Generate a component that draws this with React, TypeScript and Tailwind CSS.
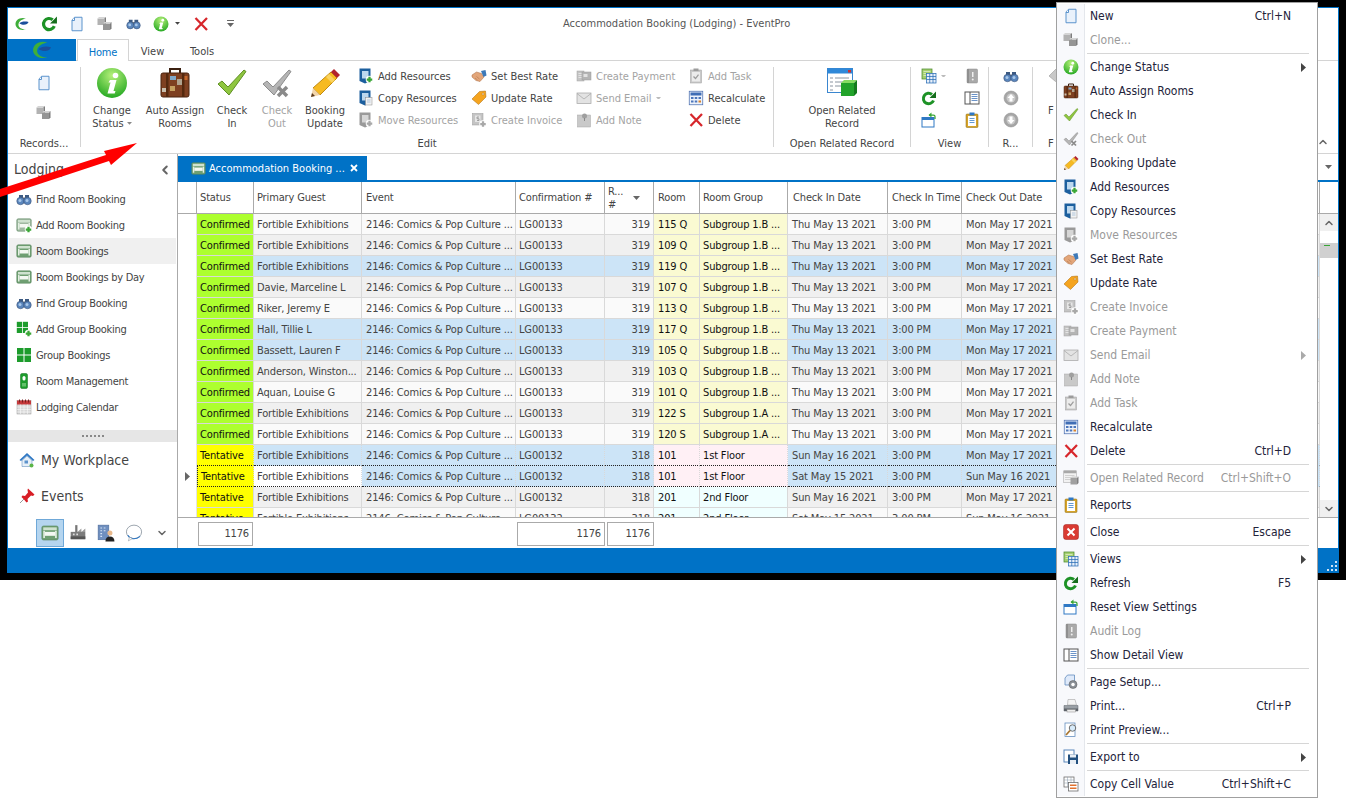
import React from "react";
import { ChevronLeft, ChevronUp, ChevronDown } from "lucide-react";

const Cube = ({ x, y, c = "#a8a8a8" }: { x: number; y: number; c?: string }) => (
  <g>
    <rect x={x} y={y} width="14" height="13" fill={c} />
    <path d={`M${x} ${y}l3-3h14l-3 3z`} fill="#d4d4d4" />
    <path d={`M${x + 14} ${y}l3-3v13l-3 3z`} fill="#7d7d7d" />
  </g>
);
const Plus = ({ x = 24, y = 24, c = "#3aa636" }: { x?: number; y?: number; c?: string }) => (
  <g>
    <circle cx={x} cy={y} r="7.500" fill="#fff" />
    <path d={`M${x - 5.5} ${y}h11M${x} ${y - 5.5}v11`} stroke={c} strokeWidth="4.500" />
  </g>
);
const Bed = ({ g = false }: { g?: boolean }) => (
  <g>
    <rect x="1.500" y="3.500" width="29" height="25" rx="3" fill={g ? "#9fb8a0" : "#6f9f72"} stroke="#54805a" />
    <rect x="4" y="6" width="24" height="5" fill="#cfe2cf" />
    <rect x="7" y="14" width="18" height="7" fill="#f4f8f2" />
    <rect x="4" y="12" width="3" height="13" fill="#e4efe2" />
    <rect x="25" y="12" width="3" height="13" fill="#e4efe2" />
  </g>
);
const Res = ({ g = false }: { g?: boolean }) => (
  <g>
    <path d="M3 1h22v25l-11 5-11-5z" fill={g ? "#9a9a9a" : "#1c5f9e"} />
    <rect x="8" y="6" width="13" height="15" fill={g ? "#d6d6d6" : "#bcd8ef"} />
  </g>
);
const Grid4 = () => (
  <g fill="#1d9c2c">
    <rect x="2" y="2" width="13" height="13" />
    <rect x="17" y="2" width="13" height="13" />
    <rect x="2" y="17" width="13" height="13" />
    <rect x="17" y="17" width="13" height="13" />
  </g>
);

const icons: Record<string, React.ReactNode> = {
  logo: (
    <g fill="none">
      <path d="M24 5C12 1 3 8 3 16c0 8 9 14 21 11-10 0-16-5-15-11 1-6 8-10 15-11z" fill="#3fae3a" />
      <path d="M11 15c3-4 11-5 18-3-1 5-10 8-18 3z" fill="#1b4f9c" />
    </g>
  ),
  page: (
    <g>
      <path d="M11 2.500h15v27H6V8z" fill="#e9f1fb" stroke="#5b93cc" strokeWidth="2" />
      <path d="M11 3v6H6" fill="#fff" stroke="#5b93cc" strokeWidth="2" />
    </g>
  ),
  clone: (
    <g>
      <Cube x={1} y={5} c="#b2b2b2" />
      <Cube x={12} y={15} c="#959595" />
    </g>
  ),
  binoc: (
    <g>
      <rect x="6" y="8" width="8" height="8" fill="#3c5a82" />
      <rect x="18" y="8" width="8" height="8" fill="#3c5a82" />
      <rect x="13" y="13" width="6" height="6" fill="#5f6d7e" />
      <circle cx="9" cy="20" r="7.500" fill="#5a86bd" stroke="#31476a" />
      <circle cx="23" cy="20" r="7.500" fill="#5a86bd" stroke="#31476a" />
      <circle cx="8" cy="19" r="3" fill="#a9c8ea" />
      <circle cx="22" cy="19" r="3" fill="#a9c8ea" />
    </g>
  ),
  info: (
    <g>
      <defs>
        <radialGradient id="infog" cx="50%" cy="25%" r="80%">
          <stop offset="0" stopColor="#b6f07a" />
          <stop offset="1" stopColor="#1ea51e" />
        </radialGradient>
      </defs>
      <circle cx="16" cy="16" r="15" fill="url(#infog)" />
      <circle cx="19.500" cy="8.500" r="2.800" fill="#fff" />
      <path d="M14 13h6.500l-3 11h2l-.8 2.500H11.500l3-11h-2z" fill="#fff" />
    </g>
  ),
  del: <path d="M5 4l23 24M28 4L5 28" stroke="#d7262b" strokeWidth="4.500" />,
  refresh: (
    <g>
      <path d="M25 21a10.500 10.500 0 1 1-3-12" fill="none" stroke="#1d9226" strokeWidth="6" />
      <path d="M30 3v13H17z" fill="#156d1c" />
    </g>
  ),
  suitcase: (
    <g>
      <path d="M11 6V2h10v4" fill="none" stroke="#3b2010" strokeWidth="2" />
      <rect x="2" y="6" width="28" height="24" rx="2" fill="#7e4021" stroke="#4b2410" />
      <rect x="7" y="6" width="2.500" height="24" fill="#54290f" />
      <rect x="23" y="6" width="2.500" height="24" fill="#54290f" />
      <rect x="11" y="9" width="6" height="4" fill="#7fa8c9" />
      <rect x="18" y="12" width="5" height="6" fill="#b0a38f" />
      <rect x="11" y="19" width="5" height="5" fill="#c5a060" />
      <rect x="3" y="21" width="4" height="4" fill="#c9bfae" />
      <rect x="25.500" y="9" width="3" height="4" fill="#c3672c" />
    </g>
  ),
  check: <path d="M2 17l4-3 6 6L28 3l2 1.500L13 28z" fill="#8fc640" stroke="#5f8f24" />,
  checkout: (
    <g>
      <path d="M2 17l4-3 6 6L28 3l2 1.500L13 28z" fill="#b5b5b5" stroke="#8c8c8c" />
      <path d="M17 20l9 9M26 20l-9 9" stroke="#8a8a8a" strokeWidth="3.500" />
    </g>
  ),
  pencil: (
    <g>
      <path d="M22 5l6 6L11 28l-7-7z" fill="#f6ba22" stroke="#c08a12" />
      <path d="M20 7l6 6-3 3-6-6z" fill="#fad35f" />
      <path d="M22 5l3-3 6 6-3 3z" fill="#b2222e" />
      <path d="M4 21l7 7-9 2z" fill="#f2d5ab" />
      <path d="M2 30l1-4 3 3z" fill="#5a3a20" />
    </g>
  ),
  addres: (
    <g>
      <Res />
      <Plus x={23} y={23} />
    </g>
  ),
  copyres: (
    <g>
      <Res />
      <rect x="15" y="15" width="13" height="15" fill="#f2f2f2" stroke="#8a8a8a" />
      <path d="M18 20h7M18 24h7" stroke="#9bb7d4" strokeWidth="1.500" />
    </g>
  ),
  moveres: (
    <g>
      <Res g />
      <Plus x={23} y={23} c="#a8a8a8" />
    </g>
  ),
  hand: (
    <g>
      <path d="M2 14l9-6 10 3 5 7-8 9-8-2-8-7z" fill="#e3a67a" stroke="#a96b40" />
      <path d="M11 17l6 5M8 20l5 4" stroke="#a96b40" />
      <path d="M20 6l9-2 2 11-6 3z" fill="#3d79b8" />
    </g>
  ),
  tag: (
    <g>
      <path d="M2 18L17 3l12-1 1 12-15 15z" fill="#f5a41f" stroke="#a8690a" />
      <circle cx="24" cy="8" r="2" fill="#fff" stroke="#a8690a" />
    </g>
  ),
  taggrey: (
    <g>
      <path d="M2 18L17 3l12-1 1 12-15 15z" fill="#c8c8c8" stroke="#8d8d8d" />
      <circle cx="24" cy="8" r="2" fill="#fff" stroke="#8d8d8d" />
    </g>
  ),
  invoice: (
    <g>
      <rect x="3" y="3" width="21" height="23" fill="#c4c4c4" stroke="#9a9a9a" />
      <rect x="8" y="7" width="11" height="13" fill="#e6e6e6" />
      <path d="M16 10h-4v3.500h4V17h-4" fill="none" stroke="#8a8a8a" strokeWidth="1.500" />
      <Plus x={24} y={24} c="#a8a8a8" />
    </g>
  ),
  payment: (
    <g>
      <rect x="2" y="6" width="14" height="20" fill="#c4c4c4" stroke="#a4a4a4" />
      <rect x="12" y="8" width="18" height="16" fill="#b4b4b4" stroke="#9a9a9a" />
      <rect x="15" y="12" width="8" height="6" fill="#e2e2e2" />
      <path d="M5 11h6M5 15h6M5 19h6" stroke="#eee" strokeWidth="1.500" />
    </g>
  ),
  mail: (
    <g>
      <rect x="2" y="6" width="28" height="21" fill="#e3e3e3" stroke="#a8a8a8" strokeWidth="1.500" />
      <path d="M2 7l14 11L30 7" fill="none" stroke="#a8a8a8" strokeWidth="1.500" />
    </g>
  ),
  note: (
    <g>
      <rect x="3" y="6" width="26" height="24" fill="#c9c9c9" stroke="#a6a6a6" />
      <circle cx="17" cy="8" r="5" fill="#9f9f9f" />
      <path d="M17 12v6" stroke="#888" strokeWidth="2" />
    </g>
  ),
  task: (
    <g>
      <rect x="5" y="4" width="22" height="26" fill="#c9c9c9" stroke="#9c9c9c" />
      <rect x="8" y="8" width="16" height="19" fill="#ececec" />
      <rect x="11" y="1" width="10" height="5" fill="#9c9c9c" />
      <path d="M11 17l4 4 6-8" fill="none" stroke="#9c9c9c" strokeWidth="2.500" />
    </g>
  ),
  calc: (
    <g>
      <rect x="2.500" y="2.500" width="27" height="27" fill="#eef3fb" stroke="#4c6fb0" strokeWidth="1.500" />
      <rect x="5" y="5" width="22" height="6" fill="#3f6db5" />
      <g fill="#4c76bb">
        <rect x="6" y="14" width="5" height="4" />
        <rect x="13.500" y="14" width="5" height="4" />
        <rect x="21" y="14" width="5" height="4" />
        <rect x="6" y="21" width="5" height="4" />
        <rect x="13.500" y="21" width="5" height="4" />
        <rect x="21" y="21" width="5" height="4" fill="#d9822b" />
      </g>
    </g>
  ),
  openrec: (
    <g>
      <rect x="1.500" y="1.500" width="25" height="24" fill="#fff" stroke="#3a86cf" />
      <rect x="1.500" y="1.500" width="25" height="5" fill="#2f88d8" />
      <rect x="22" y="3" width="3" height="2.500" fill="#d03030" />
      <path d="M4 11h3M9 11h14M4 15h3M9 15h14M4 19h3M9 19h9M4 23h3" stroke="#8a94a0" />
      <rect x="15" y="16" width="13" height="13" fill="#22a32a" />
      <path d="M15 16l3-3h13l-3 3z" fill="#86dc62" />
      <path d="M28 16l3-3v13l-3 3z" fill="#137a1c" />
    </g>
  ),
  openrecgrey: (
    <g>
      <rect x="1.500" y="1.500" width="25" height="24" fill="#f2f2f2" stroke="#a0a0a0" />
      <rect x="1.500" y="1.500" width="25" height="5" fill="#a8a8a8" />
      <path d="M4 11h19M4 15h19M4 19h14" stroke="#b0b0b0" />
      <rect x="15" y="16" width="13" height="13" fill="#a0a0a0" />
      <path d="M15 16l3-3h13l-3 3z" fill="#cfcfcf" />
      <path d="M28 16l3-3v13l-3 3z" fill="#808080" />
    </g>
  ),
  views: (
    <g>
      <rect x="2" y="2" width="20" height="20" fill="#a4cf6f" stroke="#4b8a2f" strokeWidth="1.500" />
      <path d="M5 7h14M5 11h14M5 15h14" stroke="#fff" />
      <rect x="11" y="11" width="19" height="19" fill="#e8f0fa" stroke="#2a6db5" strokeWidth="1.500" />
      <path d="M11 17h19M11 23h19M17.500 11v19M24 11v19" stroke="#2a6db5" strokeWidth="1.500" />
    </g>
  ),
  reset: (
    <g>
      <rect x="2" y="11" width="24" height="19" fill="#fff" stroke="#2f78c4" strokeWidth="2" />
      <rect x="2" y="11" width="24" height="5" fill="#2f78c4" />
      <path d="M16 6h9a3 3 0 0 1 3 3v5" fill="none" stroke="#3aa636" strokeWidth="2.500" />
      <path d="M21 1v10l-6-5z" fill="#3aa636" />
    </g>
  ),
  audit: (
    <g>
      <rect x="6" y="2" width="21" height="28" rx="2" fill="#a9a9a9" stroke="#8a8a8a" />
      <rect x="6" y="2" width="4" height="28" fill="#8f8f8f" />
      <path d="M17.500 8v10" stroke="#efefef" strokeWidth="3" />
      <circle cx="17.500" cy="23" r="2" fill="#efefef" />
    </g>
  ),
  up: (
    <g>
      <circle cx="16" cy="16" r="14" fill="#a6a6a6" stroke="#8a8a8a" />
      <circle cx="16" cy="16" r="9" fill="#c9c9c9" />
      <path d="M16 8l7 8h-4v7h-6v-7H9z" fill="#fff" />
    </g>
  ),
  down: (
    <g>
      <circle cx="16" cy="16" r="14" fill="#a6a6a6" stroke="#8a8a8a" />
      <circle cx="16" cy="16" r="9" fill="#c9c9c9" />
      <path d="M16 24l7-8h-4V9h-6v7H9z" fill="#fff" />
    </g>
  ),
  detail: (
    <g>
      <rect x="2" y="4" width="28" height="24" fill="#fff" stroke="#555" strokeWidth="2" />
      <path d="M12 4v24" stroke="#555" strokeWidth="2" />
      <path d="M15 9h12M15 13h12M15 17h12M15 21h12" stroke="#3a6fb5" strokeWidth="1.500" />
    </g>
  ),
  reports: (
    <g>
      <rect x="4" y="4" width="24" height="27" rx="2" fill="#d6a42a" stroke="#8d6a12" />
      <rect x="8" y="8" width="16" height="20" fill="#fff" />
      <rect x="11" y="1" width="10" height="6" fill="#2f78c4" />
      <path d="M11 13h10M11 17h10M11 21h10" stroke="#2f78c4" strokeWidth="1.500" />
    </g>
  ),
  closeb: (
    <g>
      <rect x="1" y="1" width="30" height="30" rx="5" fill="#d93a32" stroke="#9c1f1a" />
      <path d="M9 9l14 14M23 9L9 23" stroke="#fff" strokeWidth="4" />
    </g>
  ),
  setup: (
    <g>
      <path d="M9 2h14v20H4V8z" fill="#dfeafa" stroke="#5b87bb" strokeWidth="1.500" />
      <circle cx="20" cy="21" r="8" fill="#8a8f96" stroke="#555" />
      <circle cx="20" cy="21" r="3.500" fill="#fff" />
    </g>
  ),
  print: (
    <g>
      <path d="M10 3h14l3 11H9z" fill="#f4f4f4" stroke="#999" />
      <path d="M2 15h28v11H2z" fill="#9aa0a6" stroke="#5d6268" />
      <rect x="2" y="21" width="28" height="5" fill="#5d6268" />
      <rect x="8" y="23" width="17" height="5" fill="#eee" stroke="#888" />
    </g>
  ),
  preview: (
    <g>
      <rect x="4" y="2" width="20" height="27" fill="#fff" stroke="#5b87bb" strokeWidth="1.500" />
      <circle cx="19" cy="12" r="6.500" fill="#d7ebfb" stroke="#6d6d6d" strokeWidth="2" />
      <path d="M14 17l-8 9" stroke="#a8752f" strokeWidth="3.500" />
    </g>
  ),
  export: (
    <g>
      <rect x="2" y="2" width="20" height="24" fill="#fff" stroke="#5b87bb" strokeWidth="2" />
      <rect x="10" y="11" width="20" height="19" fill="#23507f" />
      <rect x="14" y="11" width="12" height="6" fill="#e8eef5" />
      <rect x="14" y="22" width="12" height="8" fill="#e8eef5" />
    </g>
  ),
  copycell: (
    <g>
      <rect x="2" y="2" width="20" height="20" fill="#fff" stroke="#666" strokeWidth="1.500" />
      <path d="M2 8h20M2 14h20M9 2v20M16 2v12" stroke="#8899aa" />
      <rect x="11" y="13" width="19" height="17" fill="#fff" stroke="#666" strokeWidth="1.500" />
      <rect x="14" y="17" width="13" height="3" fill="#e2702c" />
      <rect x="14" y="23" width="13" height="3" fill="#e2702c" />
    </g>
  ),
  bed: <Bed />,
  addbed: (
    <g>
      <Bed g />
      <Plus x={25} y={25} />
    </g>
  ),
  grid: <Grid4 />,
  addgrid: (
    <g>
      <g transform="scale(0.8)">
        <Grid4 />
      </g>
      <Plus x={25} y={25} />
    </g>
  ),
  mgmt: (
    <g>
      <rect x="9" y="1" width="14" height="30" rx="3" fill="#1d9c2c" stroke="#0f6f1a" />
      <rect x="13" y="6" width="6" height="9" rx="3" fill="#fff" />
      <rect x="12" y="20" width="8" height="7" fill="#63c16b" />
    </g>
  ),
  cal: (
    <g>
      <rect x="2" y="3" width="28" height="27" fill="#d9d9d9" stroke="#999" />
      <rect x="2" y="3" width="28" height="8" fill="#c5383a" />
      <path d="M7 1v6M13 1v6M19 1v6M25 1v6" stroke="#7a1f20" strokeWidth="2" />
      <path d="M2 16h28M2 21h28M2 26h28M9 11v19M16 11v19M23 11v19" stroke="#fff" />
    </g>
  ),
  home: (
    <g>
      <path d="M16 2L1 16l3 2 12-11 12 11 3-2z" fill="#2f78c4" />
      <path d="M6 17l10-9 10 9v12H6z" fill="#e8f0f8" stroke="#4a7fb5" />
      <rect x="11" y="17" width="7" height="6" fill="#5d93cc" />
      <circle cx="25" cy="27" r="4" fill="#5bb548" />
    </g>
  ),
  pin: (
    <g>
      <path d="M18 1l13 12-3 3-4-1-7 7 1 5-3 2-5-6-5-5 2-3 5 1 6-7-1-5z" fill="#d81e26" />
      <path d="M10 22l-8 8" stroke="#999" strokeWidth="2" />
    </g>
  ),
  factory: (
    <g>
      <rect x="11" y="2" width="4" height="13" fill="#777" />
      <rect x="3" y="14" width="26" height="13" fill="#7c7c7c" />
      <path d="M15 14l7-6v6l7-6v6z" fill="#9a9a9a" />
      <rect x="3" y="22" width="26" height="5" fill="#555" />
      <rect x="7" y="17" width="3" height="3" fill="#ddd" />
      <rect x="13" y="17" width="3" height="3" fill="#ddd" />
    </g>
  ),
  office: (
    <g>
      <rect x="2" y="2" width="19" height="26" fill="#6f8fbf" stroke="#4a6a99" />
      <path d="M6 7h3M12 7h3M6 12h3M12 12h3M6 17h3M6 22h3" stroke="#d6e4f5" strokeWidth="2" />
      <circle cx="23" cy="16" r="4.500" fill="#e9b98c" />
      <path d="M15 31c0-6 3-9 8-9s8 3 8 9z" fill="#222" />
    </g>
  ),
  chat: (
    <g>
      <ellipse cx="16" cy="14" rx="13.500" ry="12" fill="#fff" stroke="#8b96a0" strokeWidth="1.500" />
      <path d="M5 20c4 8 14 8 22 2" fill="none" stroke="#2f78c4" strokeWidth="2" />
      <path d="M8 23l-2 7 7-4z" fill="#fff" stroke="#8b96a0" />
    </g>
  ),
};

function Ic({ n, s = 16 }: { n: string; s?: number }) {
  return (
    <svg width={s} height={s} viewBox="0 0 32 32" className="shrink-0">
      {icons[n]}
    </svg>
  );
}

function Tri({ c = "#555", dir = "down", w = 7 }: { c?: string; dir?: "down" | "right"; w?: number }) {
  return dir === "down" ? (
    <svg width={w} height={(w * 4) / 7} viewBox="0 0 7 4" className="shrink-0">
      <path d="M0 0h7L3.500 4z" fill={c} />
    </svg>
  ) : (
    <svg width="5" height="9" viewBox="0 0 5 9" className="shrink-0">
      <path d="M0 0l5 4.500L0 9z" fill={c} />
    </svg>
  );
}

function Big({ icon, a, b, w, off, arrow }: { icon: string; a: string; b: string; w: string; off?: boolean; arrow?: boolean }) {
  return (
    <div className={`${w} flex flex-col items-center shrink-0`}>
      <Ic n={icon} s={32} />
      <div className={`mt-[5px] leading-[13px] text-center ${off ? "text-[#a3a3a3]" : "text-[#444]"}`}>{a}</div>
      <div className={`leading-[13px] text-center flex items-center gap-[3px] ${off ? "text-[#a3a3a3]" : "text-[#444]"}`}>
        {b}
        {arrow && <Tri c="#888" w={5} />}
      </div>
    </div>
  );
}

function Small({ icon, t, off, arrow }: { icon: string; t?: string; off?: boolean; arrow?: boolean }) {
  return (
    <div className={`h-[22px] flex items-center gap-[4px] whitespace-nowrap ${off ? "text-[#a3a3a3]" : "text-[#444]"}`}>
      <Ic n={icon} s={16} />
      {t && <span>{t}</span>}
      {arrow && <Tri c="#bbb" w={5} />}
    </div>
  );
}

function Group({ w, label, children, line = true }: { w: string; label: string; children: React.ReactNode; line?: boolean }) {
  return (
    <div className={`${w} h-[80px] shrink-0 flex flex-col ${line ? "border-r border-[#d4d4d4]" : ""}`}>
      <div className="h-[70px] shrink-0 flex">{children}</div>
      <div className="h-[14px] shrink-0 leading-[14px] text-center text-[#444] whitespace-nowrap">{label}</div>
    </div>
  );
}

type Row = { s: string; g: string; c: string; r: string; room: string; grp: string; cin: string; cout: string; bg: string };
const B = "bg-[#cce4f7]";
const G = "bg-[#f0f0f0]";
const W = "bg-[#fafafa]";
const mk = (s: string, g: string, c: string, r: string, room: string, grp: string, cin: string, cout: string, bg: string): Row => ({ s, g, c, r, room, grp, cin, cout, bg });
const FE = "Fortible Exhibitions";
const T13 = "Thu May 13 2021";
const M17 = "Mon May 17 2021";
const S1 = "Subgroup 1.B ...";
const rows: Row[] = [
  mk("Confirmed", FE, "LG00133", "319", "115 Q", S1, T13, M17, W),
  mk("Confirmed", FE, "LG00133", "319", "109 Q", S1, T13, M17, G),
  mk("Confirmed", FE, "LG00133", "319", "119 Q", S1, T13, M17, B),
  mk("Confirmed", "Davie, Marceline L", "LG00133", "319", "107 Q", S1, T13, M17, G),
  mk("Confirmed", "Riker, Jeremy E", "LG00133", "319", "113 Q", S1, T13, M17, W),
  mk("Confirmed", "Hall, Tillie L", "LG00133", "319", "117 Q", S1, T13, M17, B),
  mk("Confirmed", "Bassett, Lauren F", "LG00133", "319", "105 Q", S1, T13, M17, B),
  mk("Confirmed", "Anderson, Winston...", "LG00133", "319", "103 Q", S1, T13, M17, G),
  mk("Confirmed", "Aquan, Louise G", "LG00133", "319", "101 Q", S1, T13, M17, W),
  mk("Confirmed", FE, "LG00133", "319", "122 S", "Subgroup 1.A ...", T13, M17, G),
  mk("Confirmed", FE, "LG00133", "319", "120 S", "Subgroup 1.A ...", T13, M17, W),
  mk("Tentative", FE, "LG00132", "318", "101", "1st Floor", "Sun May 16 2021", M17, B),
  mk("Tentative", FE, "LG00132", "318", "101", "1st Floor", "Sat May 15 2021", "Sun May 16 2021", B),
  mk("Tentative", FE, "LG00132", "318", "201", "2nd Floor", "Sun May 16 2021", M17, G),
  mk("Tentative", FE, "LG00132", "318", "201", "2nd Floor", "Sat May 15 2021", "Sun May 16 2021", W),
];

const side = [
  ["binoc", "Find Room Booking"],
  ["addbed", "Add Room Booking"],
  ["bed", "Room Bookings"],
  ["bed", "Room Bookings by Day"],
  ["binoc", "Find Group Booking"],
  ["addgrid", "Add Group Booking"],
  ["grid", "Group Bookings"],
  ["mgmt", "Room Management"],
  ["cal", "Lodging Calendar"],
];

type M = { i?: string; t?: string; k?: string; off?: boolean; sub?: boolean };
const menu: M[] = [
  { i: "page", t: "New", k: "Ctrl+N" },
  { i: "clone", t: "Clone...", off: true },
  {},
  { i: "info", t: "Change Status", sub: true },
  { i: "suitcase", t: "Auto Assign Rooms" },
  { i: "check", t: "Check In" },
  { i: "checkout", t: "Check Out", off: true },
  { i: "pencil", t: "Booking Update" },
  { i: "addres", t: "Add Resources" },
  { i: "copyres", t: "Copy Resources" },
  { i: "moveres", t: "Move Resources", off: true },
  { i: "hand", t: "Set Best Rate" },
  { i: "tag", t: "Update Rate" },
  { i: "invoice", t: "Create Invoice", off: true },
  { i: "payment", t: "Create Payment", off: true },
  { i: "mail", t: "Send Email", off: true, sub: true },
  { i: "note", t: "Add Note", off: true },
  { i: "task", t: "Add Task", off: true },
  { i: "calc", t: "Recalculate" },
  { i: "del", t: "Delete", k: "Ctrl+D" },
  {},
  { i: "openrecgrey", t: "Open Related Record", k: "Ctrl+Shift+O", off: true },
  {},
  { i: "reports", t: "Reports" },
  {},
  { i: "closeb", t: "Close", k: "Escape" },
  {},
  { i: "views", t: "Views", sub: true },
  { i: "refresh", t: "Refresh", k: "F5" },
  { i: "reset", t: "Reset View Settings" },
  { i: "audit", t: "Audit Log", off: true },
  { i: "detail", t: "Show Detail View" },
  {},
  { i: "setup", t: "Page Setup..." },
  { i: "print", t: "Print...", k: "Ctrl+P" },
  { i: "preview", t: "Print Preview..." },
  {},
  { i: "export", t: "Export to", sub: true },
  {},
  { i: "copycell", t: "Copy Cell Value", k: "Ctrl+Shift+C" },
];

const hCell = "h-full flex items-center pl-[3px] border-r border-[#aaa] shrink-0 text-[#444] whitespace-nowrap tracking-[-0.15px]";

export default function App() {
  return (
    <div className="relative w-[1346px] h-[798px] overflow-hidden bg-white text-[11px] leading-none text-[#444] [font-family:'DejaVu_Sans_Condensed','DejaVu_Sans','Liberation_Sans',sans-serif]">
      <div className="h-[580px] bg-black pt-[7px] px-[7px] pb-[7px]">
        <div className="h-[566px] border border-b-0 border-[#0072c6] bg-white flex flex-col">
          {/* quick access */}
          <div className="h-[31px] shrink-0 flex items-center">
            <div className="w-[27px] flex justify-center"><Ic n="logo" s={16} /></div>
            <div className="w-[28px] flex justify-center"><Ic n="refresh" s={17} /></div>
            <div className="w-[28px] flex justify-center"><Ic n="page" s={16} /></div>
            <div className="w-[28px] flex justify-center"><Ic n="clone" s={16} /></div>
            <div className="w-[28px] flex justify-center"><Ic n="binoc" s={15} /></div>
            <div className="w-[28px] flex justify-center"><Ic n="info" s={16} /></div>
            <div className="w-[12px] flex justify-start"><Tri c="#444" w={5} /></div>
            <div className="w-[28px] flex justify-center"><Ic n="del" s={16} /></div>
            <div className="w-[30px] flex justify-center">
              <svg width="7" height="7" viewBox="0 0 7 7"><path d="M0 0h7v1H0zM0 3h7L3.500 7z" fill="#666" /></svg>
            </div>
            <div className="ml-[318px] text-[#555] whitespace-nowrap">Accommodation Booking (Lodging) - EventPro</div>
          </div>
          {/* tabs */}
          <div className="h-[22px] shrink-0 flex border-b border-[#d4d4d4]">
            <div className="w-[68px] h-[22px] bg-[#0072c6] flex items-center justify-center"><Ic n="logo" s={22} /></div>
            <div className="ml-[1px] w-[52px] h-[22px] pt-[3px] bg-white border border-b-0 border-[#d4d4d4] flex items-center justify-center text-[#0072c6] tracking-[-0.15px]">Home</div>
            <div className="w-[47px] pt-[3px] flex items-center justify-center">View</div>
            <div className="w-[52px] pt-[3px] flex items-center justify-center">Tools</div>
          </div>
          {/* ribbon */}
          <div className="h-[93px] shrink-0 border-b border-[#d4d4d4] pt-[6px] flex overflow-hidden">
            <Group w="w-[73px]" label="Records...">
              <div className="w-full flex flex-col items-center pt-[8px] gap-[14px]">
                <Ic n="page" s={16} />
                <Ic n="clone" s={16} />
              </div>
            </Group>
            <Group w="w-[693px]" label="Edit">
              <Big icon="info" a="Change" b="Status" w="w-[62px]" arrow />
              <Big icon="suitcase" a="Auto Assign" b="Rooms" w="w-[64px]" />
              <Big icon="check" a="Check" b="In" w="w-[50px]" />
              <Big icon="checkout" a="Check" b="Out" w="w-[40px]" off />
              <Big icon="pencil" a="Booking" b="Update" w="w-[56px]" />
              <div className="w-[113px] pl-[5px] -mt-[2px]">
                <Small icon="addres" t="Add Resources" />
                <Small icon="copyres" t="Copy Resources" />
                <Small icon="moveres" t="Move Resources" off />
              </div>
              <div className="w-[105px] pl-[5px] -mt-[2px]">
                <Small icon="hand" t="Set Best Rate" />
                <Small icon="tag" t="Update Rate" />
                <Small icon="invoice" t="Create Invoice" off />
              </div>
              <div className="w-[112px] pl-[5px] -mt-[2px]">
                <Small icon="payment" t="Create Payment" off />
                <Small icon="mail" t="Send Email" off arrow />
                <Small icon="note" t="Add Note" off />
              </div>
              <div className="w-[90px] pl-[5px] -mt-[2px]">
                <Small icon="task" t="Add Task" off />
                <Small icon="calc" t="Recalculate" />
                <Small icon="del" t="Delete" />
              </div>
            </Group>
            <Group w="w-[137px]" label="Open Related Record">
              <Big icon="openrec" a="Open Related" b="Record" w="w-full" />
            </Group>
            <Group w="w-[78px]" label="View">
              <div className="w-[53px] pl-[10px] -mt-[2px]">
                <Small icon="views" arrow />
                <Small icon="refresh" />
                <Small icon="reset" />
              </div>
              <div className="-mt-[2px]">
                <Small icon="audit" off />
                <Small icon="detail" />
                <Small icon="reports" />
              </div>
            </Group>
            <Group w="w-[44px]" label="R...">
              <div className="w-full flex flex-col items-center -mt-[2px]">
                <Small icon="binoc" />
                <Small icon="up" off />
                <Small icon="down" off />
              </div>
            </Group>
            <div className="h-[80px] ml-[15px] w-[20px] shrink-0 flex flex-col items-start">
              <div className="h-[37px] shrink-0 flex items-start"><Ic n="taggrey" s={16} /></div>
              <div className="h-[33px] shrink-0 pt-[1px]">F</div>
              <div className="h-[14px] shrink-0 leading-[14px]">F</div>
            </div>
            <div className="flex-1 h-[80px] flex items-end justify-end">
              <ChevronUp size={12} strokeWidth={3} color="#666" className="mr-[9px] -mb-[1px]" />
            </div>
          </div>
          {/* body */}
          <div className="h-[394px] shrink-0 flex">
            <div className="w-[170px] shrink-0 border-r border-[#aaa] flex flex-col">
              <div className="h-[32px] flex items-center pl-[6px] justify-between pr-[5px]">
                <span className="text-[14px] text-[#444] -mt-[2px]">Lodging</span>
                <ChevronLeft size={14} strokeWidth={3.500} color="#666" />
              </div>
              {side.map(([ic, t], i) => (
                <div key={t} className={`h-[26px] mx-[1px] flex items-center pl-[7px] gap-[4px] tracking-[-0.3px] ${i === 2 ? "bg-[#f0f0f0]" : ""}`}>
                  <Ic n={ic} s={16} />
                  <span>{t}</span>
                </div>
              ))}
              <div className="mt-[10px] h-[12px] bg-[#e6e6e6] flex items-center justify-center gap-[2px]">
                <div className="w-[2px] h-[2px] bg-[#888]" />
                <div className="w-[2px] h-[2px] bg-[#888]" />
                <div className="w-[2px] h-[2px] bg-[#888]" />
                <div className="w-[2px] h-[2px] bg-[#888]" />
                <div className="w-[2px] h-[2px] bg-[#888]" />
                <div className="w-[2px] h-[2px] bg-[#888]" />
              </div>
              <div className="h-[36px] flex items-center pl-[11px] gap-[6px] text-[14px]"><Ic n="home" s={16} /><span>My Workplace</span></div>
              <div className="h-[36px] flex items-center pl-[11px] gap-[6px] text-[14px]"><Ic n="pin" s={16} /><span>Events</span></div>
              <div className="mt-[5px] h-[28px] pl-[28px] flex">
                <div className="w-[28px] h-[28px] bg-[#b5d5ef] border border-[#6fa8d8] flex items-center justify-center"><Ic n="bed" s={18} /></div>
                <div className="w-[28px] flex items-center justify-center"><Ic n="factory" s={18} /></div>
                <div className="w-[28px] flex items-center justify-center"><Ic n="office" s={18} /></div>
                <div className="w-[28px] flex items-center justify-center"><Ic n="chat" s={18} /></div>
                <div className="w-[28px] flex items-center justify-center"><ChevronDown size={12} strokeWidth={3} color="#666" /></div>
              </div>
            </div>
            <div className="flex-1 flex flex-col min-w-0">
              {/* doc tabs */}
              <div className="h-[28px] shrink-0 flex items-end border-b-2 border-[#0072c6]">
                <div className="w-[189px] h-[24px] bg-[#0072c6] flex items-center pl-[13px] text-white">
                  <Ic n="bed" s={15} />
                  <span className="ml-[3px] flex-1 whitespace-nowrap">Accommodation Booking ...</span>
                  <span className="w-[20px] mr-[4px] flex justify-center">
                    <svg width="8" height="8" viewBox="0 0 8 8"><path d="M1 1l6 6M7 1L1 7" stroke="#fff" strokeWidth="1.800" /></svg>
                  </span>
                </div>
                <div className="flex-1 h-full flex items-center justify-end pr-[6px]"><Tri c="#666" /></div>
              </div>
              {/* header */}
              <div className="h-[32px] shrink-0 flex border-b border-[#aaa]">
                <div className="w-[19px] h-full border-r border-[#aaa] shrink-0" />
                <div className={`w-[57px] ${hCell}`}>Status</div>
                <div className={`w-[108px] ${hCell}`}>Primary Guest</div>
                <div className={`w-[154px] ${hCell} pl-[4px]`}>Event</div>
                <div className={`w-[89px] ${hCell}`}>Confirmation #</div>
                <div className={`w-[49px] ${hCell} justify-between pr-[13px]`}>
                  <span className="leading-[13px]">R...<br />#</span>
                  <Tri c="#666" />
                </div>
                <div className={`w-[46px] ${hCell} pl-[4px]`}>Room</div>
                <div className={`w-[88px] ${hCell}`}>Room Group</div>
                <div className={`w-[100px] ${hCell} pl-[5px]`}>Check In Date</div>
                <div className={`w-[74px] ${hCell} pl-[4px]`}>Check In Time</div>
                <div className={`flex-1 ${hCell} pl-[4px]`}>Check Out Date</div>
                <div className="w-[18px] shrink-0" />
              </div>
              {/* rows */}
              <div className="h-[303px] shrink-0 flex">
                <div className="flex-1 overflow-hidden min-w-0 tracking-[-0.15px]">
                  {rows.map((r, i) => {
                    const edge = i === 11 || i === 12;
                    const bb = edge ? "border-b border-dotted border-[#222]" : "border-b border-[#d9d9d9]";
                    const cell = `h-full flex items-center pl-[3px] shrink-0 whitespace-nowrap border-r border-r-[#d9d9d9] ${bb}`;
                    const tent = r.s === "Tentative";
                    const floor = r.grp === "1st Floor" ? "bg-[#fff0f5]" : r.grp === "2nd Floor" ? "bg-[#f0ffff]" : "bg-[#fafad2]";
                    return (
                      <div key={i} className="h-[21px] flex">
                        <div className="w-[19px] shrink-0 flex items-center justify-center border-r border-[#e4e4e4]">
                          {i === 12 && <Tri c="#666" dir="right" />}
                        </div>
                        <div className={`w-[57px] ${cell} text-[#111] ${tent ? "bg-[#ffff00]" : "bg-[#adff2f]"} ${i === 12 ? "border-l border-l-[#222] border-dotted" : ""}`}>{r.s}</div>
                        <div className={`w-[108px] ${cell} ${i === 12 ? "bg-white" : r.bg}`}>{r.g}</div>
                        <div className={`w-[154px] ${cell} pl-[4px] ${r.bg}`}>2146: Comics &amp; Pop Culture ...</div>
                        <div className={`w-[89px] ${cell} ${r.bg}`}>{r.c}</div>
                        <div className={`w-[49px] ${cell} justify-end pr-[3px] ${r.bg}`}>{r.r}</div>
                        <div className={`w-[46px] ${cell} pl-[4px] text-[#111] ${floor}`}>{r.room}</div>
                        <div className={`w-[88px] ${cell} text-[#111] ${floor}`}>{r.grp}</div>
                        <div className={`w-[100px] ${cell} pl-[4px] ${r.bg}`}>{r.cin}</div>
                        <div className={`w-[74px] ${cell} pl-[4px] ${r.bg}`}>3:00 PM</div>
                        <div className={`flex-1 ${cell} pl-[4px] ${r.bg}`}>{r.cout}</div>
                      </div>
                    );
                  })}
                </div>
                <div className="w-[18px] shrink-0 flex flex-col bg-white">
                  <div className="h-[17px] bg-[#f0f0f0] flex items-center justify-center"><ChevronUp size={12} strokeWidth={3} color="#666" /></div>
                  <div className="mt-[12px] h-[15px] bg-[#d0d0d0] pt-[2px] pl-[4px]"><div className="w-[6px] h-[1px] bg-[#3aa636]" /></div>
                  <div className="flex-1" />
                  <div className="h-[17px] bg-[#f0f0f0] flex items-center justify-center"><ChevronDown size={12} strokeWidth={3} color="#666" /></div>
                </div>
              </div>
              {/* footer */}
              <div className="h-[31px] shrink-0 border-t border-[#aaa] flex items-center pl-[20px]">
                <div className="mt-[1px] w-[55px] h-[24px] border border-[#aaa] flex items-center justify-end pr-[3px] tracking-[-0.15px]">1176</div>
                <div className="mt-[1px] ml-[264px] w-[88px] h-[24px] border border-[#aaa] flex items-center justify-end pr-[3px] tracking-[-0.15px]">1176</div>
                <div className="mt-[1px] ml-[2px] w-[47px] h-[24px] border border-[#aaa] flex items-center justify-end pr-[3px] tracking-[-0.15px]">1176</div>
              </div>
            </div>
          </div>
          {/* status */}
          <div className="h-[25px] shrink-0 bg-[#0072c6] flex items-end justify-end pr-[1px] pb-[2px]">
            <svg width="10" height="10" viewBox="0 0 10 10">
              <path d="M8 0h2v2H8zM4 4h2v2H4zM8 4h2v2H8zM0 8h2v2H0zM4 8h2v2H4zM8 8h2v2H8z" fill="#cfe3f5" />
            </svg>
          </div>
        </div>
      </div>

      {/* red arrow annotation */}
      <svg width="140" height="200" viewBox="0 0 140 200" className="absolute left-0 top-0 pointer-events-none">
        <path d="M0 189L106 155l-2-4 33-8-26 22-2-4L0 197z" fill="#ff0000" />
      </svg>

      {/* context menu */}
      <div className="absolute left-[1056px] top-[2px] w-[262px] bg-white border border-[#a0a0a0] py-[1px] text-[12px] text-[#23233a]">
        {menu.map((m, i) =>
          m.t ? (
            <div key={i} className="h-[24px] flex">
              <div className="w-[28px] shrink-0 bg-[#f8f9fc] border-r border-[#e4e7ec] flex items-center justify-center"><Ic n={m.i!} s={16} /></div>
              <div className={`flex-1 pl-[5px] flex items-center whitespace-nowrap ${m.off ? "text-[#9a9a9a]" : ""}`}>{m.t}</div>
              <div className={`whitespace-nowrap flex items-center ${m.off ? "text-[#9a9a9a]" : ""}`}>{m.k}</div>
              <div className="w-[26px] shrink-0 flex items-center justify-end pr-[11px]">
                {m.sub && <Tri dir="right" c={m.off ? "#aaa" : "#444"} />}
              </div>
            </div>
          ) : (
            <div key={i} className="h-[3px] flex">
              <div className="w-[28px] shrink-0 bg-[#f8f9fc] border-r border-[#e4e7ec]" />
              <div className="flex-1 ml-[2px] mr-[8px] mt-[1px] h-[1px] bg-[#d6d6d6]" />
            </div>
          )
        )}
      </div>
    </div>
  );
}
